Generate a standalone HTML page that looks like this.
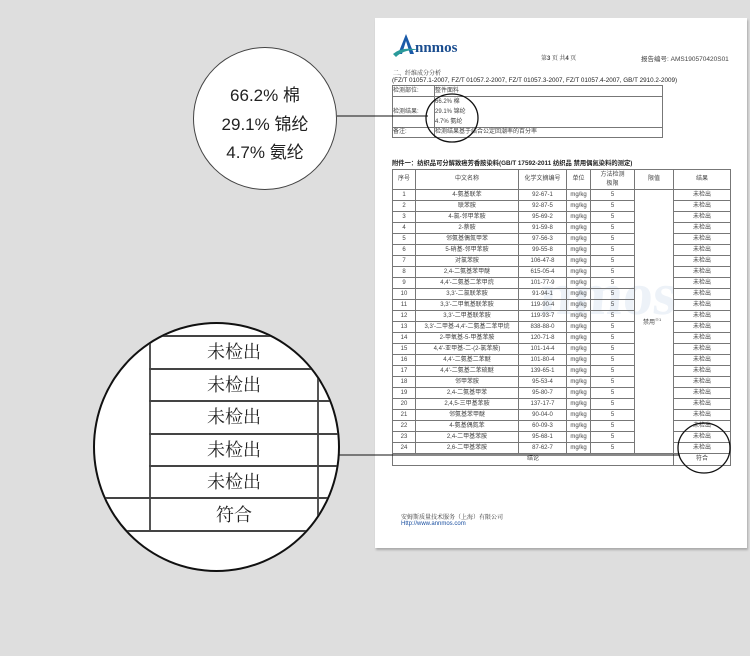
<!DOCTYPE html>
<html><head><meta charset="utf-8"><style>
*{margin:0;padding:0;box-sizing:border-box}
body{width:750px;height:656px;background:#dedede;position:relative;overflow:hidden;font-family:"Liberation Sans","Noto Sans CJK SC",sans-serif;color:#333}
.a{position:absolute;white-space:nowrap}
#paper{position:absolute;left:375px;top:18px;width:372px;height:530px;background:#fff;box-shadow:1px 2px 2px #aaa}
table{border-collapse:collapse;position:absolute;table-layout:fixed}
td{border:1px solid #777;font-size:6px;text-align:center;color:#444;padding:0;line-height:9px}
.s{font-family:"Liberation Serif","Noto Serif CJK SC",serif}
.h{position:absolute;height:1.5px;background:#444}
</style></head><body>
<div id="paper"></div>
<div class="a" style="left:540px;top:260px;font:bold 60px 'Liberation Serif',serif;color:#edf2f8;transform:skewX(-5deg)">nmos</div>
<!-- logo -->
<svg class="a" style="left:392px;top:32px" width="75" height="28">
<polygon points="14,2 22,22 6,22" fill="#1a5aa8"/>
<polygon points="14,9 18,22 10,22" fill="#fff"/>
<path d="M1,22 Q10,14 28,18 Q12,17 4,25 Z" fill="#2a9a9a"/>
<text x="23" y="20" font-family="Liberation Serif" font-weight="bold" font-size="15" fill="#1a4d8f">nnmos</text>
</svg>
<div class="a s" style="left:541px;top:53px;font-size:6px;color:#444">第<b style="font-family:'Liberation Sans'">3</b> 页 共<b style="font-family:'Liberation Sans'">4</b> 页</div>
<div class="a" style="left:641px;top:53px;font-size:6.5px;color:#444">报告编号: AMS190570420S01</div>
<div class="a s" style="left:393px;top:68px;font-size:6px">二、纤维成分分析</div>
<div class="a" style="left:392px;top:77px;font-size:6.3px;color:#222">(FZ/T 01057.1-2007, FZ/T 01057.2-2007, FZ/T 01057.3-2007, FZ/T 01057.4-2007, GB/T 2910.2-2009)</div>
<table style="left:392px;top:85px;width:271px">
<col style="width:42px"><col>
<tr style="height:11px"><td style="text-align:left">检测部位:</td><td style="text-align:left">整件面料</td></tr>
<tr style="height:30px"><td style="text-align:left">检测结果:</td><td style="text-align:left;line-height:10px">66.2% 棉<br>29.1% 锦纶<br>4.7% 氨纶</td></tr>
<tr style="height:9px"><td style="text-align:left">备注:</td><td style="text-align:left">检测结果基于结合公定回潮率的百分率</td></tr>
</table>
<div class="a" style="left:392px;top:158px;font-size:6.3px;font-weight:bold;color:#222">附件一：纺织品可分解致癌芳香胺染料(GB/T 17592-2011 纺织品 禁用偶氮染料的测定)</div>
<table style="left:392px;top:169px;width:339px">
<col style="width:23px"><col style="width:103px"><col style="width:48px"><col style="width:24px"><col style="width:44px"><col style="width:39px"><col>
<tr style="height:20px"><td>序号</td><td>中文名称</td><td>化学文摘编号</td><td>单位</td><td>方法检测<br>极限</td><td>限值</td><td>结果</td></tr>
<tr style="height:11px"><td>1</td><td>4-氨基联苯</td><td>92-67-1</td><td>mg/kg</td><td>5</td><td rowspan="24" style="text-align:left;padding-left:8px">禁用<sup style="font-size:4px">※1</sup></td><td>未检出</td></tr>
<tr style="height:11px"><td>2</td><td>联苯胺</td><td>92-87-5</td><td>mg/kg</td><td>5</td><td>未检出</td></tr>
<tr style="height:11px"><td>3</td><td>4-氯-邻甲苯胺</td><td>95-69-2</td><td>mg/kg</td><td>5</td><td>未检出</td></tr>
<tr style="height:11px"><td>4</td><td>2-萘胺</td><td>91-59-8</td><td>mg/kg</td><td>5</td><td>未检出</td></tr>
<tr style="height:11px"><td>5</td><td>邻氨基偶氮甲苯</td><td>97-56-3</td><td>mg/kg</td><td>5</td><td>未检出</td></tr>
<tr style="height:11px"><td>6</td><td>5-硝基-邻甲苯胺</td><td>99-55-8</td><td>mg/kg</td><td>5</td><td>未检出</td></tr>
<tr style="height:11px"><td>7</td><td>对氯苯胺</td><td>106-47-8</td><td>mg/kg</td><td>5</td><td>未检出</td></tr>
<tr style="height:11px"><td>8</td><td>2,4-二氨基苯甲醚</td><td>615-05-4</td><td>mg/kg</td><td>5</td><td>未检出</td></tr>
<tr style="height:11px"><td>9</td><td>4,4'-二氨基二苯甲烷</td><td>101-77-9</td><td>mg/kg</td><td>5</td><td>未检出</td></tr>
<tr style="height:11px"><td>10</td><td>3,3'-二氯联苯胺</td><td>91-94-1</td><td>mg/kg</td><td>5</td><td>未检出</td></tr>
<tr style="height:11px"><td>11</td><td>3,3'-二甲氧基联苯胺</td><td>119-90-4</td><td>mg/kg</td><td>5</td><td>未检出</td></tr>
<tr style="height:11px"><td>12</td><td>3,3'-二甲基联苯胺</td><td>119-93-7</td><td>mg/kg</td><td>5</td><td>未检出</td></tr>
<tr style="height:11px"><td>13</td><td>3,3'-二甲基-4,4'-二氨基二苯甲烷</td><td>838-88-0</td><td>mg/kg</td><td>5</td><td>未检出</td></tr>
<tr style="height:11px"><td>14</td><td>2-甲氧基-5-甲基苯胺</td><td>120-71-8</td><td>mg/kg</td><td>5</td><td>未检出</td></tr>
<tr style="height:11px"><td>15</td><td>4,4'-亚甲基-二-(2-氯苯胺)</td><td>101-14-4</td><td>mg/kg</td><td>5</td><td>未检出</td></tr>
<tr style="height:11px"><td>16</td><td>4,4'-二氨基二苯醚</td><td>101-80-4</td><td>mg/kg</td><td>5</td><td>未检出</td></tr>
<tr style="height:11px"><td>17</td><td>4,4'-二氨基二苯硫醚</td><td>139-65-1</td><td>mg/kg</td><td>5</td><td>未检出</td></tr>
<tr style="height:11px"><td>18</td><td>邻甲苯胺</td><td>95-53-4</td><td>mg/kg</td><td>5</td><td>未检出</td></tr>
<tr style="height:11px"><td>19</td><td>2,4-二氨基甲苯</td><td>95-80-7</td><td>mg/kg</td><td>5</td><td>未检出</td></tr>
<tr style="height:11px"><td>20</td><td>2,4,5-三甲基苯胺</td><td>137-17-7</td><td>mg/kg</td><td>5</td><td>未检出</td></tr>
<tr style="height:11px"><td>21</td><td>邻氨基苯甲醚</td><td>90-04-0</td><td>mg/kg</td><td>5</td><td>未检出</td></tr>
<tr style="height:11px"><td>22</td><td>4-氨基偶氮苯</td><td>60-09-3</td><td>mg/kg</td><td>5</td><td>未检出</td></tr>
<tr style="height:11px"><td>23</td><td>2,4-二甲基苯胺</td><td>95-68-1</td><td>mg/kg</td><td>5</td><td>未检出</td></tr>
<tr style="height:11px"><td>24</td><td>2,6-二甲基苯胺</td><td>87-62-7</td><td>mg/kg</td><td>5</td><td>未检出</td></tr>
<tr style="height:12px"><td colspan="6">结论</td><td>符合</td></tr>
</table>
<div class="a s" style="left:401px;top:512px;font-size:6px;color:#333">安姆斯质量技术服务（上海）有限公司</div>
<div class="a" style="left:401px;top:521px;font-size:6px;color:#1a4fa0">Http://www.annmos.com</div>

<svg class="a" style="left:0;top:0" width="750" height="656">
<line x1="337" y1="116" x2="428" y2="116" stroke="#111" stroke-width="1"/>
<ellipse cx="452" cy="118" rx="26" ry="24" fill="none" stroke="#111" stroke-width="1.3"/>
<line x1="338" y1="455" x2="680" y2="455" stroke="#111" stroke-width="1"/>
<ellipse cx="704" cy="448" rx="26" ry="25" fill="none" stroke="#111" stroke-width="1.3"/>
</svg>

<div class="a" style="left:193px;top:47px;width:144px;height:143px;border-radius:50%;background:#fff;border:1.5px solid #444"></div>
<div class="a" style="left:193px;top:82px;width:144px;text-align:center;font-size:17px;line-height:28.5px;color:#222">66.2% 棉<br>29.1% 锦纶<br>4.7% 氨纶</div>

<div class="a" style="left:93px;top:322px;width:247px;height:250px;border-radius:50%;background:#fff;border:2px solid #111;overflow:hidden">
<div style="position:absolute;left:-2px;top:-2px;width:247px;height:250px">
<div style="position:absolute;left:56px;top:0;width:2px;height:209px;background:#555"></div>
<div style="position:absolute;left:224px;top:0;width:2px;height:209px;background:#555"></div>
<div class="h" style="left:0;top:13px;width:247px"></div>
<div class="h" style="left:56px;top:46px;width:191px"></div>
<div class="h" style="left:56px;top:78px;width:191px"></div>
<div class="h" style="left:56px;top:111px;width:191px"></div>
<div class="h" style="left:56px;top:143px;width:191px"></div>
<div class="h" style="left:0;top:175px;width:247px"></div>
<div class="h" style="left:0;top:208px;width:247px"></div>
<div style="position:absolute;left:58px;top:14px;width:166px;text-align:center;font-family:'Liberation Serif','Noto Serif CJK SC',serif;font-size:18px;color:#222">
<div style="height:32.5px;line-height:32px">未检出</div>
<div style="height:32.5px;line-height:32px">未检出</div>
<div style="height:32.5px;line-height:32px">未检出</div>
<div style="height:32.5px;line-height:32px">未检出</div>
<div style="height:32.5px;line-height:32px">未检出</div>
<div style="height:32.5px;line-height:32px">符合</div>
</div>
</div>
</div>
</body></html>
